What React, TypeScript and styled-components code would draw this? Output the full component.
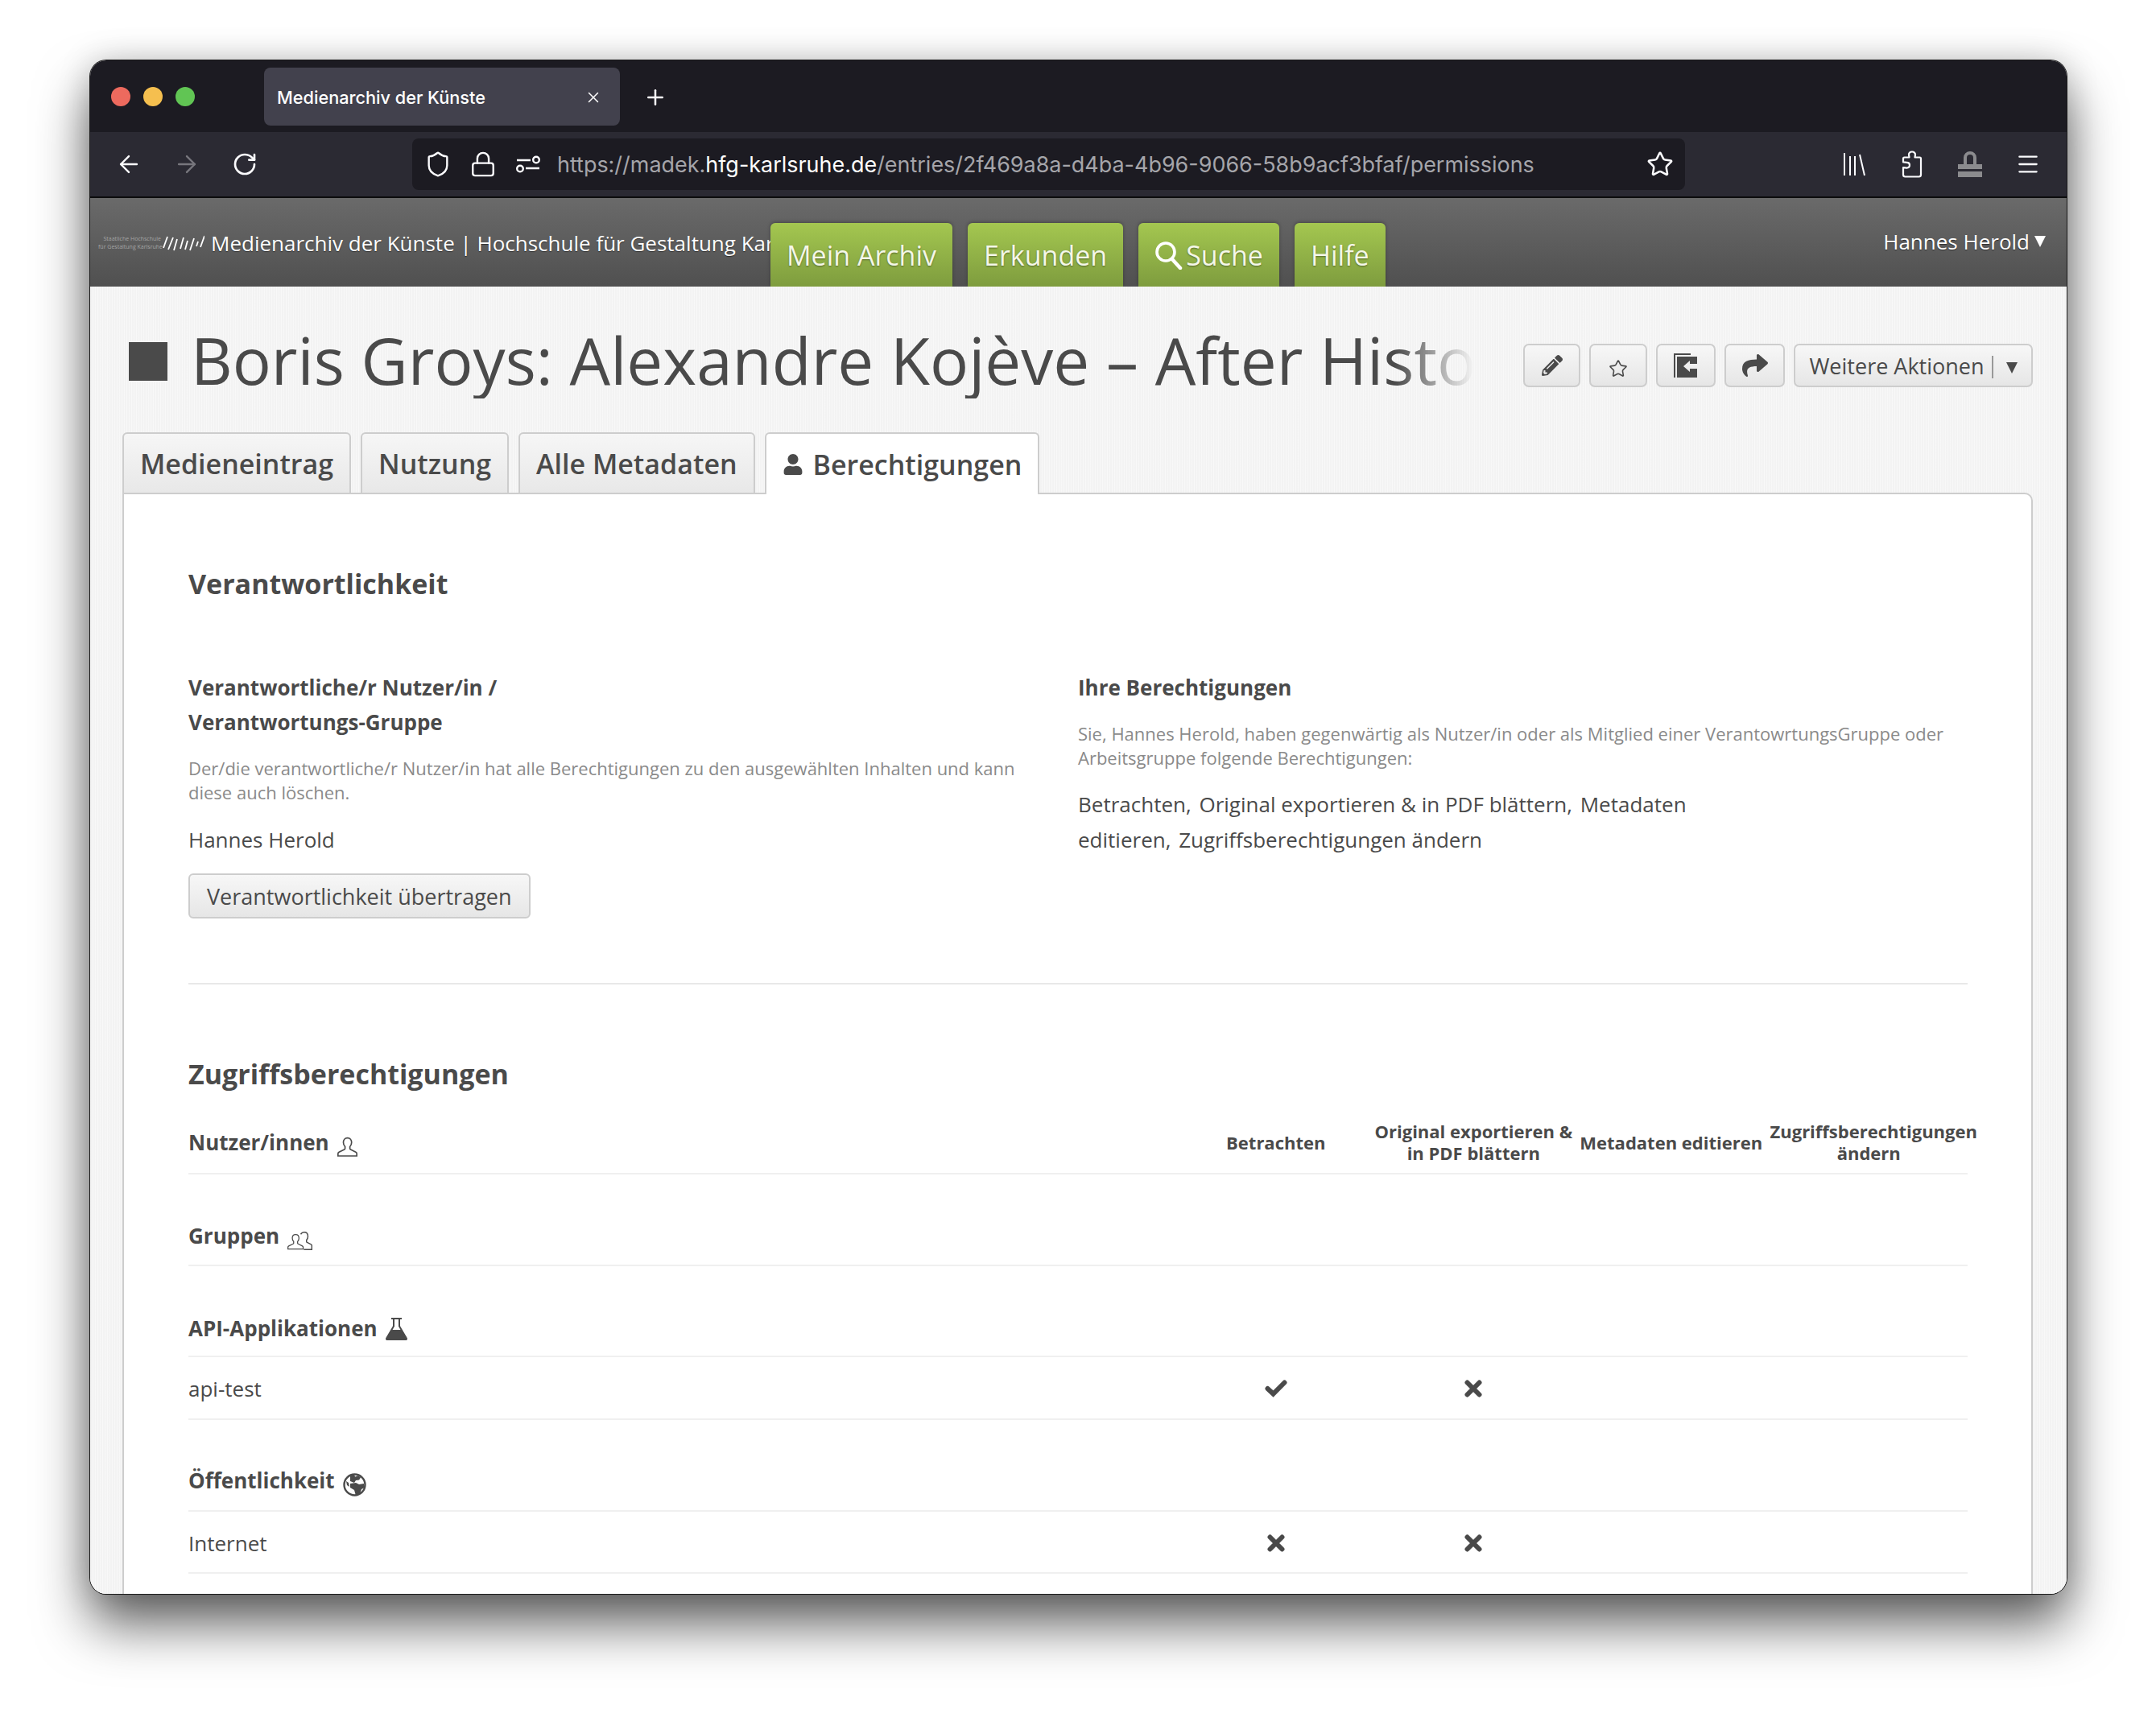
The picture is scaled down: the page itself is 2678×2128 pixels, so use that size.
import React from 'react';
import styled, { createGlobalStyle } from 'styled-components';
import { ArrowLeft, ArrowRight, Lock, Menu, Plus, RotateCw, Shield, Star, X } from 'lucide-react';
import { FaPencilAlt, FaShare, FaUser } from 'react-icons/fa';

const text = '#4a4a4a';
const sans = '"Open Sans", "Noto Sans", sans-serif';

const GlobalStyle = createGlobalStyle`
  html, body { margin: 0; padding: 0; background: #fff; }
  * { box-sizing: border-box; }
`;

const Page = styled.div`
  width: 2678px;
  height: 2128px;
  padding: 75px 111px 0 112px;
  overflow: hidden;
  background: #fff;
  font-family: ${sans};
  color: ${text};
`;

const Window = styled.div`
  height: 1905px;
  border-radius: 20px;
  overflow: hidden;
  display: flex;
  flex-direction: column;
  box-shadow: 0 0 0 1px #1a1a1a, 0 38px 66px rgba(0, 0, 0, 0.62), 0 0 40px rgba(0, 0, 0, 0.18);
`;

/* browser chrome */
const TitleBar = styled.div`
  flex: 0 0 89px;
  display: flex;
  align-items: center;
  padding-left: 26px;
  background: #1c1b22;
`;

const Lights = styled.div`
  display: flex;
  gap: 16px;
`;

const Light = styled.span<{ $color: string }>`
  width: 24px;
  height: 24px;
  border-radius: 50%;
  background: ${p => p.$color};
`;

const BrowserTab = styled.div`
  width: 442px;
  height: 72px;
  margin-left: 86px;
  padding: 2px 22px 0 16px;
  border-radius: 8px;
  background: #42414d;
  color: #fff;
  display: flex;
  align-items: center;
  justify-content: space-between;
  font: 500 21.7px Inter, sans-serif;
`;

const NewTab = styled.div`
  margin: 2px 0 0 29px;
  display: flex;
  color: #fbfbfe;
`;

const Toolbar = styled.div`
  flex: 0 0 82px;
  display: flex;
  align-items: center;
  padding-left: 12px;
  background: #2b2a33;
  border-bottom: 2px solid #0c0c0d;
`;

const ToolSlot = styled.div<{ $muted?: boolean; $width?: number }>`
  flex: 0 0 ${p => p.$width ?? 72}px;
  display: flex;
  justify-content: center;
  align-items: center;
  color: ${p => (p.$muted ? '#77767d' : '#fbfbfe')};
`;

const UrlBar = styled.div`
  width: 1581px;
  height: 64px;
  margin-left: 172px;
  padding: 0 3px 0 4px;
  border-radius: 8px;
  background: #1c1b22;
  display: flex;
  align-items: center;
`;

const UrlText = styled.div`
  margin-left: 8px;
  font: 400 26.95px Inter, sans-serif;
  color: #a5a5aa;
  white-space: nowrap;
  b {
    font-weight: 400;
    color: #fff;
  }
`;

const UrlStar = styled(ToolSlot)`
  margin-left: auto;
`;

const ToolIcons = styled.div`
  display: flex;
  margin-left: 174px;
`;

/* site header */
const SiteHeader = styled.header`
  flex: 0 0 110px;
  display: flex;
  background: linear-gradient(#6a6a6a, #505050);
  color: #fff;
`;

const Brand = styled.div`
  flex: 0 0 845px;
  overflow: hidden;
  display: flex;
  align-items: center;
  padding: 2px 0 0 10px;
  white-space: nowrap;
`;

const LogoText = styled.div`
  width: 78px;
  font-size: 7px;
  line-height: 10px;
  text-align: right;
  color: #a5a5a5;
  white-space: nowrap;
`;

const LogoMarks = styled.svg`
  margin: 0 8px 0 2px;
  flex: none;
`;

const BrandName = styled.div`
  font-size: 26px;
  text-shadow: 0 1px 1px rgba(0, 0, 0, 0.5);
`;

const Nav = styled.nav`
  display: flex;
  align-items: flex-end;
  gap: 19px;
`;

const NavButton = styled.a`
  height: 79px;
  padding: 0 20px;
  display: flex;
  align-items: center;
  gap: 3px;
  border-radius: 6px 6px 0 0;
  background: linear-gradient(#a4c750, #7e9c3e);
  box-shadow: 0 -1px 4px rgba(0, 0, 0, 0.3);
  font-size: 34px;
  color: #f4f7e8;
  text-shadow: 0 1px 2px rgba(0, 0, 0, 0.4);
`;

const UserMenu = styled.div`
  margin-left: auto;
  padding: 0 26px 2px 0;
  align-self: center;
  display: flex;
  align-items: center;
  gap: 6px;
  font-size: 26px;
  text-shadow: 0 1px 1px rgba(0, 0, 0, 0.5);
`;

const Caret = styled.span<{ $size: number; $color: string; $top?: number }>`
  width: 0;
  height: 0;
  margin-top: ${p => p.$top ?? 0}px;
  border-left: ${p => p.$size * 0.55}px solid transparent;
  border-right: ${p => p.$size * 0.55}px solid transparent;
  border-top: ${p => p.$size}px solid ${p => p.$color};
`;

/* page body */
const Main = styled.main`
  flex: 1;
  min-height: 0;
  padding: 0 42px 0 40px;
  background-color: #f3f3f3;
  background-image: repeating-linear-gradient(90deg, rgba(255, 255, 255, 0.4) 0 1px, transparent 1px 3px);
`;

const TitleRow = styled.div`
  height: 181px;
  padding: 43px 0 0 8px;
  display: flex;
  align-items: flex-start;
`;

const TitleMark = styled.div`
  flex: none;
  width: 48px;
  height: 48px;
  margin: 26px 29px 0 0;
  background: ${text};
`;

const Title = styled.h1`
  width: 1593px;
  margin: 0 62px 0 0;
  font-size: 80px;
  font-weight: 400;
  line-height: 96px;
  white-space: nowrap;
  overflow: hidden;
  -webkit-mask-image: linear-gradient(90deg, #000 1495px, transparent 1593px);
  mask-image: linear-gradient(90deg, #000 1495px, transparent 1593px);
`;

const Actions = styled.div`
  margin-top: 28px;
  display: flex;
  gap: 11px;
`;

const ActionButton = styled.button<{ $width?: number }>`
  height: 54px;
  width: ${p => (p.$width ? `${p.$width}px` : 'auto')};
  padding: 0;
  display: flex;
  align-items: center;
  justify-content: center;
  border: 2px solid #cdcdcd;
  border-radius: 7px;
  background: linear-gradient(#f7f7f7, #e6e6e6);
  color: ${text};
  font-family: ${sans};
`;

const MoreButton = styled(ActionButton)`
  width: 297px;
  font-size: 27px;
  font-weight: 500;
`;

const MoreDivider = styled.span`
  width: 2px;
  height: 28px;
  margin: 4px 16px 0 9px;
  background: #999;
`;

const LowStar = styled(Star)`
  margin-top: 8px;
`;

const Tabs = styled.div`
  height: 77px;
  display: flex;
  gap: 12px;
  position: relative;
  z-index: 1;
`;

const TabItem = styled.div<{ $active?: boolean }>`
  height: 77px;
  padding: 0 20px;
  display: flex;
  align-items: center;
  gap: 12px;
  border: 2px solid #cdcdcd;
  border-bottom: ${p => (p.$active ? '0' : '2px solid #cdcdcd')};
  border-radius: 6px 6px 0 0;
  background: ${p => (p.$active ? '#fff' : 'linear-gradient(#f6f6f6, #e8e8e8)')};
  font-size: 34px;
  font-weight: 600;
`;

const Panel = styled.section`
  height: 1400px;
  margin-top: -2px;
  padding: 0 79px 0 80px;
  background: #fff;
  border: 2px solid #cdcdcd;
  border-radius: 0 10px 0 0;
`;

const SectionTitle = styled.h2<{ $top: number }>`
  margin: ${p => p.$top}px 0 0;
  font-size: 34px;
  font-weight: 700;
  line-height: 50px;
`;

const Columns = styled.div`
  margin-top: 83px;
  display: grid;
  grid-template-columns: 1105px 1fr;
`;

const SubTitle = styled.h3`
  margin: 0;
  font-size: 26px;
  font-weight: 700;
  line-height: 43px;
`;

const Hint = styled.p`
  margin: 20px 0 0;
  font-size: 22px;
  line-height: 30px;
  color: #8a8a8a;
`;

const Value = styled.p<{ $top: number }>`
  margin: ${p => p.$top}px 0 0;
  font-size: 26px;
  line-height: 44px;
`;

const Permission = styled.span`
  margin-right: 3px;
`;

const TransferButton = styled.button`
  height: 56px;
  margin-top: 20px;
  padding: 0 21px;
  border: 2px solid #cdcdcd;
  border-radius: 6px;
  background: linear-gradient(#f7f7f7, #e6e6e6);
  color: ${text};
  font-family: ${sans};
  font-size: 27px;
  font-weight: 500;
`;

const Divider = styled.hr`
  margin: 80px 0 0;
  border: 0;
  border-top: 2px solid #e8e8e8;
`;

const GRID = 'grid-template-columns: 1fr repeat(4, 245.5px);';

const HeadRow = styled.div`
  display: grid;
  ${GRID}
  align-items: center;
  height: 100px;
  padding-top: 22px;
  border-bottom: 2px solid #f0f0f0;
`;

const SectionRow = styled.div<{ $height: number; $bottom?: number }>`
  display: grid;
  ${GRID}
  height: ${p => p.$height}px;
  align-items: end;
  padding-bottom: ${p => p.$bottom ?? 17}px;
  border-bottom: 2px solid #f0f0f0;
`;

const DataRow = styled.div<{ $height: number }>`
  display: grid;
  ${GRID}
  height: ${p => p.$height}px;
  padding-top: 2px;
  align-items: center;
  border-bottom: 2px solid #f0f0f0;
`;

const RowLabel = styled.div`
  display: flex;
  align-items: center;
  gap: 10px;
  font-size: 26px;
  font-weight: 700;
  line-height: 38px;
`;

const DataLabel = styled.div`
  font-size: 26px;
`;

const HeadCell = styled.div`
  font-size: 22px;
  font-weight: 700;
  line-height: 27px;
  text-align: center;
  white-space: nowrap;
`;

const MarkCell = styled.div`
  display: flex;
  justify-content: center;
`;

const LineIcon = styled.svg<{ $top: number }>`
  flex: none;
  margin-top: ${p => p.$top}px;
`;

const Person = () => (
  <path d="M12 1.500c-3 0-4.800 2.400-4.800 5.400 0 2 .8 3.800 2 5v2.200c0 .6-.3.9-.9 1.200L2 18.500c-.8.4-1.200 1-1.200 1.800V23h22.400v-2.700c0-.8-.4-1.400-1.200-1.800l-6.100-3.100c-.6-.3-.9-.6-.9-1.200V12c1.200-1.300 2-3 2-5 0-3-1.800-5.500-4.800-5.500z" />
);

const UserIcon = () => (
  <LineIcon $top={10} width="25" height="25" viewBox="0 0 24 24" fill="none" stroke={text} strokeWidth="1.600">
    <Person />
  </LineIcon>
);

const GroupIcon = () => (
  <LineIcon $top={12} width="31" height="25" viewBox="0 0 32 24" fill="none" stroke={text} strokeWidth="1.500">
    <g transform="translate(0 2.500) scale(.87)">
      <Person />
    </g>
    <path d="M17 3.500c1-1.500 2.400-2.500 4.500-2.500 3 0 4.800 2.300 4.800 5.300 0 2-.8 3.600-1.800 4.700v2c0 .5.300.8.800 1l5 2.600c.6.300 1 .9 1 1.500V23H21" />
  </LineIcon>
);

const FlaskIcon = () => (
  <LineIcon $top={2} width="27" height="28" viewBox="0 0 27 28" fill="none" stroke={text} strokeWidth="2">
    <path d="M7 1h13M10 1v9.500L1.500 25c-.8 1.500 0 2.500 1.500 2.500h21c1.500 0 2.300-1 1.500-2.500L17 10.500V1" />
    <path fill={text} stroke="none" d="M7 15h13l6.500 10.500c.7 1.500 0 2.500-1.500 2.500H2c-1.500 0-2.200-1-1.500-2.500z" />
  </LineIcon>
);

const GlobeIcon = () => (
  <LineIcon $top={11} width="29" height="29" viewBox="0 0 29 29" fill={text} stroke="none">
    <circle cx="14.500" cy="14.500" r="13" fill="none" stroke={text} strokeWidth="2.400" />
    <path d="M9 2.500l5-1 1 3 4-1.500 3 2.500-2 3-4 .5-2 3-5-2zM4 10l1 5 3 2-1-5zM9 13l7-1 4 2 6-1 1 5-4 2-2 6-5 2-2-7-5-3z" />
  </LineIcon>
);

const CheckMark = () => (
  <svg width="28" height="22" viewBox="0 0 28 22" fill="none" stroke={text} strokeWidth="6" strokeLinecap="round">
    <path d="M3.500 11l7 6.500L24.500 3.500" />
  </svg>
);

const CrossMark = () => (
  <svg width="22" height="22" viewBox="0 0 22 22" fill="none" stroke={text} strokeWidth="6" strokeLinecap="round">
    <path d="M3.500 3.500l15 15M18.500 3.500l-15 15" />
  </svg>
);

const MovedIcon = () => (
  <svg width="30" height="30" viewBox="0 0 30 30" fill={text}>
    <path d="M0 0h21v2H2v28H0z" />
    <path fillRule="evenodd" d="M4 4h25v26H4zM20 9l-8 7 8 7v-4h9v-6h-9z" />
  </svg>
);

const SearchIcon = () => (
  <svg width="36" height="36" viewBox="0 0 36 36" fill="none" stroke="#fff" strokeLinecap="round">
    <circle cx="14" cy="14" r="11" strokeWidth="3.600" />
    <path d="M22 23l10 11" strokeWidth="4.500" />
  </svg>
);

const PermissionIcon = () => (
  <svg width="30" height="22" viewBox="0 0 30 22" fill="none" stroke="#fbfbfe" strokeWidth="2.400">
    <path d="M1 6h17M12 16h17" />
    <circle cx="25" cy="5.500" r="3.800" />
    <circle cx="5" cy="16.500" r="3.800" />
  </svg>
);

const LibraryIcon = () => (
  <svg width="28" height="30" viewBox="0 0 28 30" fill="none" stroke="#fbfbfe" strokeWidth="2">
    <path d="M2 1v28M9 5v24M15 5v24M21 3l6 26" />
  </svg>
);

const PuzzleIcon = () => (
  <svg width="28" height="34" viewBox="0 0 28 34" fill="none" stroke="#fbfbfe" strokeWidth="2.200" strokeLinejoin="round">
    <path d="M14 1.500c-2.500 0-4 1.800-4 3.700 0 1.200.5 2 .5 3.300H4.500c-1 0-1.500.6-1.500 1.500v4.500c2 0 3 .3 4.300.3 2.700 0 3.700 1.800 3.700 3.300 0 1.700-1 3.500-3.700 3.500-1.300 0-2.300-.4-4.300-.4V30c0 1.500 1 2.500 2.500 2.500h17c1.500 0 2.500-1 2.500-2.500V10c0-1-.5-1.500-1.500-1.500h-6c0-1.300.5-2.100.5-3.300 0-1.900-1.500-3.700-4-3.700z" />
  </svg>
);

const BlockerIcon = () => (
  <svg width="30" height="34" viewBox="0 0 30 34" fill="#8b8b8e">
    <path d="M7 18V9a8 8 0 0 1 16 0v9h-4V9a4 4 0 0 0-8 0v9z" />
    <path d="M0 17h30v6H0zM0 26h30v7H0z" />
  </svg>
);

const Slashes = () => (
  <LogoMarks width="52" height="20" viewBox="0 0 52 20" stroke="#fff" strokeWidth="1.800" fill="none">
    <path d="M6 2L1 16M13 3L7 18M18 5l-4 14M26 3l-4 14M31 7l-3 11M39 4l-5 15M44 8l-2 6M52 1l-5 14" />
  </LogoMarks>
);

export default function App() {
  return (
    <Page>
      <GlobalStyle />
      <Window>
        <TitleBar>
          <Lights>
            <Light $color="#ed6a5e" />
            <Light $color="#f5bf4f" />
            <Light $color="#61c554" />
          </Lights>
          <BrowserTab>
            Medienarchiv der Künste
            <X size={22} strokeWidth={1.600} />
          </BrowserTab>
          <NewTab>
            <Plus size={30} strokeWidth={2} />
          </NewTab>
        </TitleBar>

        <Toolbar>
          <ToolSlot><ArrowLeft size={34} strokeWidth={1.700} /></ToolSlot>
          <ToolSlot $muted><ArrowRight size={34} strokeWidth={1.700} /></ToolSlot>
          <ToolSlot><RotateCw size={32} strokeWidth={2} /></ToolSlot>
          <UrlBar>
            <ToolSlot $width={56}><Shield size={34} strokeWidth={1.700} /></ToolSlot>
            <ToolSlot $width={56}><Lock size={34} strokeWidth={1.700} /></ToolSlot>
            <ToolSlot $width={56}><PermissionIcon /></ToolSlot>
            <UrlText>
              https://madek.<b>hfg-karlsruhe.de</b>/entries/2f469a8a-d4ba-4b96-9066-58b9acf3bfaf/permissions
            </UrlText>
            <UrlStar $width={56}><Star size={34} strokeWidth={1.800} /></UrlStar>
          </UrlBar>
          <ToolIcons>
            <ToolSlot><LibraryIcon /></ToolSlot>
            <ToolSlot><PuzzleIcon /></ToolSlot>
            <ToolSlot><BlockerIcon /></ToolSlot>
            <ToolSlot><Menu size={32} strokeWidth={1.700} /></ToolSlot>
          </ToolIcons>
        </Toolbar>

        <SiteHeader>
          <Brand>
            <LogoText>
              Staatliche Hochschule
              <br />
              für Gestaltung Karlsruhe
            </LogoText>
            <Slashes />
            <BrandName>Medienarchiv der Künste | Hochschule für Gestaltung Karlsruhe</BrandName>
          </Brand>
          <Nav>
            <NavButton>Mein Archiv</NavButton>
            <NavButton>Erkunden</NavButton>
            <NavButton><SearchIcon />Suche</NavButton>
            <NavButton>Hilfe</NavButton>
          </Nav>
          <UserMenu>
            Hannes Herold
            <Caret $size={14} $color="#fff" />
          </UserMenu>
        </SiteHeader>

        <Main>
          <TitleRow>
            <TitleMark />
            <Title>Boris Groys: Alexandre Kojève – After History</Title>
            <Actions>
              <ActionButton $width={71}><FaPencilAlt size={26} /></ActionButton>
              <ActionButton $width={72}><LowStar size={24} strokeWidth={1.600} /></ActionButton>
              <ActionButton $width={74}><MovedIcon /></ActionButton>
              <ActionButton $width={75}><FaShare size={32} /></ActionButton>
              <MoreButton>
                Weitere Aktionen
                <MoreDivider />
                <Caret $size={14} $color={text} $top={5} />
              </MoreButton>
            </Actions>
          </TitleRow>

          <Tabs>
            <TabItem>Medieneintrag</TabItem>
            <TabItem>Nutzung</TabItem>
            <TabItem>Alle Metadaten</TabItem>
            <TabItem $active><FaUser size={26} />Berechtigungen</TabItem>
          </Tabs>

          <Panel>
            <SectionTitle $top={86}>Verantwortlichkeit</SectionTitle>
            <Columns>
              <div>
                <SubTitle>
                  Verantwortliche/r Nutzer/in /
                  <br />
                  Verantwortungs-Gruppe
                </SubTitle>
                <Hint>
                  Der/die verantwortliche/r Nutzer/in hat alle Berechtigungen zu den ausgewählten Inhalten und kann
                  <br />
                  diese auch löschen.
                </Hint>
                <Value $top={22}>Hannes Herold</Value>
                <TransferButton>Verantwortlichkeit übertragen</TransferButton>
              </div>
              <div>
                <SubTitle>Ihre Berechtigungen</SubTitle>
                <Hint>
                  Sie, Hannes Herold, haben gegenwärtig als Nutzer/in oder als Mitglied einer VerantowrtungsGruppe oder
                  <br />
                  Arbeitsgruppe folgende Berechtigungen:
                </Hint>
                <Value $top={21}>
                  <Permission>Betrachten,</Permission> <Permission>Original exportieren &amp; in PDF blättern,</Permission> Metadaten
                  <br />
                  <Permission>editieren,</Permission> Zugriffsberechtigungen ändern
                </Value>
              </div>
            </Columns>
            <Divider />

            <SectionTitle $top={86}>Zugriffsberechtigungen</SectionTitle>
            <HeadRow>
              <RowLabel>Nutzer/innen <UserIcon /></RowLabel>
              <HeadCell>Betrachten</HeadCell>
              <HeadCell>Original exportieren &amp;<br />in PDF blättern</HeadCell>
              <HeadCell>Metadaten editieren</HeadCell>
              <HeadCell>Zugriffsberechtigungen<br />ändern</HeadCell>
            </HeadRow>
            <SectionRow $height={114}>
              <RowLabel>Gruppen <GroupIcon /></RowLabel>
            </SectionRow>
            <SectionRow $height={113} $bottom={15}>
              <RowLabel>API-Applikationen <FlaskIcon /></RowLabel>
            </SectionRow>
            <DataRow $height={78}>
              <DataLabel>api-test</DataLabel>
              <MarkCell><CheckMark /></MarkCell>
              <MarkCell><CrossMark /></MarkCell>
            </DataRow>
            <SectionRow $height={114}>
              <RowLabel>Öffentlichkeit <GlobeIcon /></RowLabel>
            </SectionRow>
            <DataRow $height={77}>
              <DataLabel>Internet</DataLabel>
              <MarkCell><CrossMark /></MarkCell>
              <MarkCell><CrossMark /></MarkCell>
            </DataRow>
          </Panel>
        </Main>
      </Window>
    </Page>
  );
}
